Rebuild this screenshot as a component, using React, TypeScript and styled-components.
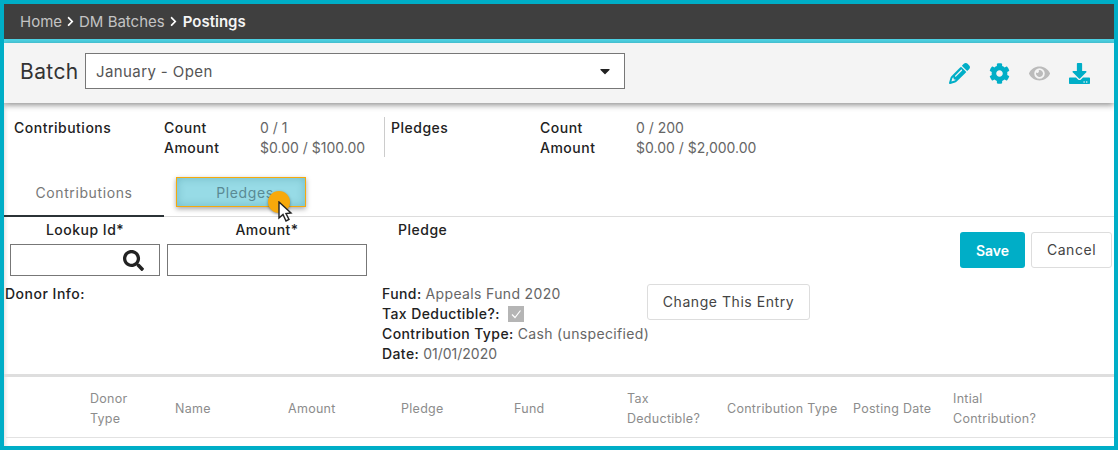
import React from "react";
import styled, { createGlobalStyle } from "styled-components";
import { FaCog, FaEye, FaDownload, FaSearch, FaChevronRight, FaCaretDown } from "react-icons/fa";
import { FaPencil } from "react-icons/fa6";

const Global = createGlobalStyle`
  html, body { margin: 0; padding: 0; background: #fff; }
  * { box-sizing: border-box; }
`;

const Frame = styled.div`
  width: 1118px;
  height: 450px;
  border: 4px solid #00aec7;
  overflow: hidden;
  background: #fff;
  box-shadow: inset 4px 0 4px -3px rgba(0, 0, 0, 0.14);
  color: #222;
  font-family: Inter, "Open Sans", sans-serif;
  font-size: 14px;
  letter-spacing: 0.5px;
`;

const Crumbs = styled.nav`
  height: 39px;
  background: #3f3f3f;
  border-bottom: 4px solid #4dd4e6;
  display: flex;
  align-items: center;
  gap: 4px;
  padding-left: 16px;
  color: #c4c4c4;
  font-size: 15px;
  letter-spacing: 0;
  svg { color: #fff; width: 9px; height: 11px; }
`;

const CrumbCurrent = styled.span`
  color: #f4f4f4;
  font-weight: 600;
  margin-left: 1px;
`;

const Toolbar = styled.header`
  height: 60px;
  background: #f4f4f4;
  box-shadow: 0 2px 6px rgba(0, 0, 0, 0.45);
  display: flex;
  align-items: center;
  padding: 0 24px 4px 16px;
  position: relative;
`;

const BatchLabel = styled.span`
  font-size: 21px;
  color: #333;
  width: 65px;
  letter-spacing: 0.4px;
`;

const Select = styled.div`
  width: 540px;
  height: 36px;
  background: #fff;
  border: 1px solid #777;
  display: flex;
  align-items: center;
  justify-content: space-between;
  padding: 0 11px 0 10px;
  color: #555;
  font-size: 15px;
  letter-spacing: 0.4px;
  svg { color: #222; width: 16px; height: 16px; }
`;

const IconBar = styled.div`
  margin-left: auto;
  display: flex;
  align-items: center;
  gap: 19px;
  padding-top: 4px;
`;

const ToolIcon = styled.span<{ $muted?: boolean }>`
  display: flex;
  color: ${(p) => (p.$muted ? "#bbbbbb" : "#00aec7")};
  svg { width: 21px; height: 21px; }
`;

const Summary = styled.section`
  display: flex;
  height: 73px;
  padding: 14px 0 0 10px;
`;

const SummaryGroup = styled.div<{ $w: number; $first: number; $divider?: boolean }>`
  width: ${(p) => p.$w}px;
  height: 40px;
  display: grid;
  grid-template-columns: ${(p) => p.$first}px 96px 1fr;
  grid-auto-rows: 20px;
  align-items: center;
  ${(p) => (p.$divider ? "border-right: 1px solid #ccc; margin-right: 6px;" : "")}
`;

const Heading = styled.span`
  font-weight: 500;
  color: #222;
`;

const DetailHeading = styled(Heading)`
  letter-spacing: 0.4px;
`;

const Value = styled.span<{ $numeric?: boolean }>`
  color: #666;
  white-space: nowrap;
  letter-spacing: ${(p) => (p.$numeric ? "0" : "0.35px")};
`;

const Tabs = styled.div`
  height: 41px;
  display: flex;
  border-bottom: 1px solid #ddd;
`;

const Tab = styled.div<{ $active?: boolean }>`
  width: 160px;
  height: 41px;
  display: flex;
  align-items: center;
  justify-content: center;
  padding-bottom: 7px;
  color: #777;
  letter-spacing: 0.6px;
  ${(p) => (p.$active ? "border-bottom: 2px solid #2b3236;" : "")}
`;

const HighlightTab = styled.div`
  position: relative;
  width: 130px;
  height: 30px;
  margin: 1px 0 0 12px;
  padding-left: 8px;
  background: #97dbe6;
  border: 1px solid #f5a90c;
  box-shadow: 0 2px 5px rgba(0, 0, 0, 0.35), inset 0 0 8px rgba(0, 90, 100, 0.25);
  display: flex;
  align-items: center;
  justify-content: center;
  color: #5a8a94;
  letter-spacing: 0.6px;
`;

const Pointer = styled.div`
  position: absolute;
  left: 91px;
  top: 13px;
  width: 22px;
  height: 22px;
  border-radius: 50%;
  background: #f7a90b;
  box-shadow: 0 1px 3px rgba(0, 0, 0, 0.4);
`;

const CursorMark = styled.svg`
  position: absolute;
  left: 101px;
  top: 23px;
  width: 15px;
  height: 22px;
`;

const Form = styled.section`
  height: 160px;
  display: flex;
  border-bottom: 3px solid #dedede;
`;

const LeftCol = styled.div`
  width: 378px;
  flex: none;
`;

const Fields = styled.div`
  display: flex;
  gap: 7px;
  padding: 4px 0 0 6px;
`;

const Field = styled.div<{ $w: number }>`
  width: ${(p) => p.$w}px;
  text-align: center;
`;

const FieldLabel = styled.div`
  height: 23px;
  line-height: 17px;
  font-weight: 500;
`;

const InputBox = styled.div`
  height: 32px;
  border: 1px solid #777;
  background: #fff;
  display: flex;
  align-items: center;
  justify-content: flex-end;
  padding-right: 15px;
  svg { width: 21px; height: 21px; color: #222; }
`;

const DonorInfo = styled.div`
  margin: 8px 0 0 1px;
  height: 20px;
  line-height: 20px;
  font-weight: 500;
`;

const MiddleCol = styled.div`
  width: 265px;
  flex: none;
`;

const PledgeLabel = styled.div`
  padding: 4px 0 0 16px;
  height: 67px;
  line-height: 17px;
  font-weight: 500;
`;

const Detail = styled.div`
  height: 20px;
  line-height: 20px;
  white-space: nowrap;
  display: flex;
  align-items: center;
  gap: 4px;
`;

const FakeCheck = styled.span`
  width: 16px;
  height: 16px;
  margin-left: 4px;
  background: #b5b5b5;
  display: flex;
  align-items: center;
  justify-content: center;
`;

const CheckMark = styled.svg`
  width: 12px;
  height: 12px;
`;

const ChangeWrap = styled.div`
  padding-top: 67px;
`;

const OutlineButton = styled.button<{ $w: number }>`
  width: ${(p) => p.$w}px;
  height: 36px;
  border: 1px solid #ddd;
  border-radius: 3px;
  background: #fff;
  color: #444;
  font: inherit;
  letter-spacing: 0.55px;
  padding: 0 0 1px;
`;

const Actions = styled.div`
  margin-left: auto;
  display: flex;
  gap: 6px;
  padding: 15px 2px 0 0;
`;

const SaveButton = styled.button`
  width: 65px;
  height: 36px;
  border: 0;
  border-radius: 3px;
  background: #00aec7;
  color: #fff;
  font: inherit;
  font-weight: 600;
  letter-spacing: 0;
  padding: 0;
`;

const TableHead = styled.div`
  height: 61px;
  margin-left: 2px;
  padding: 4px 0 0 84px;
  display: grid;
  grid-template-columns: 85px 113px 113px 113px 113px 100px 126px 100px 1fr;
  align-items: center;
  border-bottom: 1px solid #e2e2e2;
  color: #8c8c8c;
  font-size: 12.5px;
  letter-spacing: 0.28px;
  line-height: 20px;
`;

const HeadCell = styled.div<{ $stacked?: boolean }>`
  white-space: ${(p) => (p.$stacked ? "normal" : "nowrap")};
  ${(p) => (p.$stacked ? "width: min-content;" : "")}
`;

const columns = [
  { label: "Donor Type", stacked: true },
  { label: "Name" },
  { label: "Amount" },
  { label: "Pledge" },
  { label: "Fund" },
  { label: "Tax Deductible?", stacked: true },
  { label: "Contribution Type" },
  { label: "Posting Date" },
  { label: "Intial Contribution?", stacked: true },
];

export default function App() {
  return (
    <Frame>
      <Global />
      <Crumbs>
        <span>Home</span>
        <FaChevronRight />
        <span>DM Batches</span>
        <FaChevronRight />
        <CrumbCurrent>Postings</CrumbCurrent>
      </Crumbs>
      <Toolbar>
        <BatchLabel>Batch</BatchLabel>
        <Select>
          <span>January - Open</span>
          <FaCaretDown />
        </Select>
        <IconBar>
          <ToolIcon><FaPencil /></ToolIcon>
          <ToolIcon><FaCog /></ToolIcon>
          <ToolIcon $muted><FaEye /></ToolIcon>
          <ToolIcon><FaDownload /></ToolIcon>
        </IconBar>
      </Toolbar>
      <Summary>
        <SummaryGroup $w={371} $first={150} $divider>
          <Heading>Contributions</Heading><Heading>Count</Heading><Value $numeric>0 / 1</Value>
          <span /><Heading>Amount</Heading><Value $numeric>$0.00 / $100.00</Value>
        </SummaryGroup>
        <SummaryGroup $w={400} $first={149}>
          <Heading>Pledges</Heading><Heading>Count</Heading><Value $numeric>0 / 200</Value>
          <span /><Heading>Amount</Heading><Value $numeric>$0.00 / $2,000.00</Value>
        </SummaryGroup>
      </Summary>
      <Tabs>
        <Tab $active>Contributions</Tab>
        <HighlightTab>
          Pledges
          <Pointer />
          <CursorMark viewBox="0 0 15 22">
            <path d="M1 1 L1 17 L5 13.5 L8 20 L11 18.5 L8 12.5 L13 12 Z" fill="#fff" stroke="#222" strokeWidth="1.4" />
          </CursorMark>
        </HighlightTab>
      </Tabs>
      <Form>
        <LeftCol>
          <Fields>
            <Field $w={150}>
              <FieldLabel>Lookup Id*</FieldLabel>
              <InputBox><FaSearch /></InputBox>
            </Field>
            <Field $w={200}>
              <FieldLabel>Amount*</FieldLabel>
              <InputBox />
            </Field>
          </Fields>
          <DonorInfo>Donor Info:</DonorInfo>
        </LeftCol>
        <MiddleCol>
          <PledgeLabel>Pledge</PledgeLabel>
          <Detail><DetailHeading>Fund:</DetailHeading><Value>Appeals Fund 2020</Value></Detail>
          <Detail>
            <DetailHeading>Tax Deductible?:</DetailHeading>
            <FakeCheck>
              <CheckMark viewBox="0 0 12 12">
                <path d="M2 6.5 L5 9.5 L10.5 2.5" fill="none" stroke="#fff" strokeWidth="1.2" />
              </CheckMark>
            </FakeCheck>
          </Detail>
          <Detail><DetailHeading>Contribution Type:</DetailHeading><Value>Cash (unspecified)</Value></Detail>
          <Detail><DetailHeading>Date:</DetailHeading><Value $numeric>01/01/2020</Value></Detail>
        </MiddleCol>
        <ChangeWrap>
          <OutlineButton $w={163}>Change This Entry</OutlineButton>
        </ChangeWrap>
        <Actions>
          <SaveButton>Save</SaveButton>
          <OutlineButton $w={81}>Cancel</OutlineButton>
        </Actions>
      </Form>
      <TableHead>
        {columns.map((c) => (
          <HeadCell key={c.label} $stacked={c.stacked}>{c.label}</HeadCell>
        ))}
      </TableHead>
    </Frame>
  );
}
